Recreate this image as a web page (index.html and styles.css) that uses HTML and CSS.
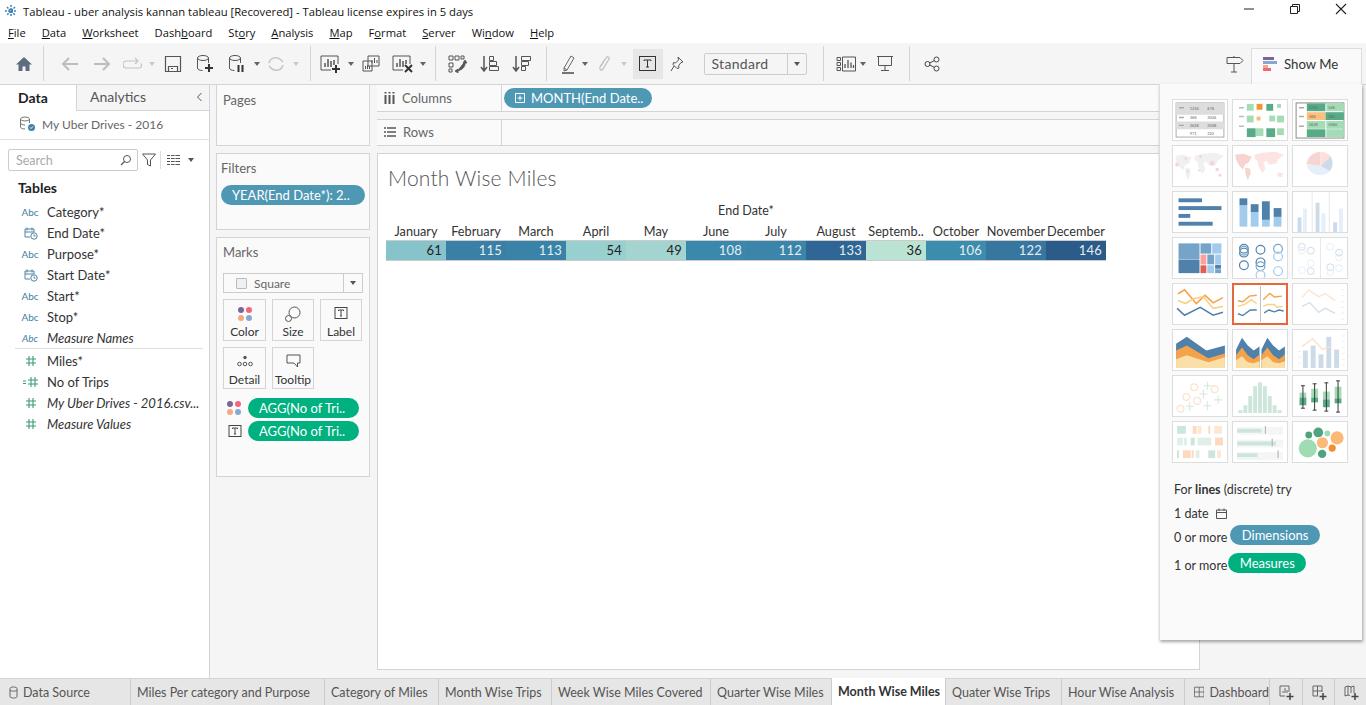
FILE: index.html
```html
<!DOCTYPE html>
<html lang="en">
<head>
  <meta charset="UTF-8">
  <title>Tableau - uber analysis kannan tableau [Recovered]</title>
  <link rel="stylesheet" href="styles.css">
</head>
<body>
  <svg class="defs" width="0" height="0">
    <symbol id="date" viewBox="0 0 14 14"><path d="M1 3h9v3M1 3v8h5M1 6h9M3 1.500v3M8 1.500v3" fill="none" stroke="#4e86a3"/><circle cx="10" cy="10" r="3.200" fill="#fff" stroke="#4e86a3"/><path d="M10 8.500V10h1.500" fill="none" stroke="#4e86a3"/></symbol>
    <symbol id="hash" viewBox="0 0 12 12"><path d="M4 1v10M8 1v10M1 4h10M1 8h10" fill="none" stroke="#3d9a78" stroke-width="1.100"/></symbol>
    <symbol id="dots" viewBox="0 0 16 16"><circle cx="4" cy="4" r="3" fill="#7b6794"/><circle cx="12" cy="4" r="3" fill="#f2677c"/><circle cx="4" cy="12" r="3" fill="#f4a97f"/><circle cx="12" cy="12" r="3" fill="#86a8d3"/></symbol>
    <symbol id="tbox" viewBox="0 0 14 14"><rect x="1" y="1.500" width="12" height="11" fill="none" stroke="#444"/><path d="M4.500 5V4h5v1M7 4v6M6 10h2" fill="none" stroke="#444"/></symbol>
  </svg>

  <div class="titlebar">
    <svg class="app-logo" width="14" height="14" viewBox="0 0 14 14"><path d="M7 1v12M1 7h12M3 3l8 8M11 3l-8 8" stroke="#3f82b5" stroke-width="1.500" stroke-dasharray="2 1"/></svg>
    <span class="app-title">Tableau - uber analysis kannan tableau [Recovered] - Tableau license expires in 5 days</span>
    <div class="win-btns">
      <svg width="12" height="12" viewBox="0 0 12 12"><path d="M1 6h10" stroke="#222"/></svg>
      <svg width="12" height="12" viewBox="0 0 12 12"><path d="M1.500 3.500h7v7h-7zM3.500 3.500v-2h7v7h-2" fill="none" stroke="#222"/></svg>
      <svg width="12" height="12" viewBox="0 0 12 12"><path d="M1 1l10 10M11 1L1 11" stroke="#222" stroke-width="1.100"/></svg>
    </div>
  </div>

  <div class="menubar">
    <span><u>F</u>ile</span>
    <span><u>D</u>ata</span>
    <span><u>W</u>orksheet</span>
    <span>Dash<u>b</u>oard</span>
    <span>St<u>o</u>ry</span>
    <span><u>A</u>nalysis</span>
    <span><u>M</u>ap</span>
    <span>F<u>o</u>rmat</span>
    <span><u>S</u>erver</span>
    <span>Wi<u>n</u>dow</span>
    <span><u>H</u>elp</span>
  </div>

  <div class="toolbar">
    <div class="tool"><svg width="18" height="18" viewBox="0 0 18 18"><path d="M9 2L1 9.500h2.500V16h4v-4.500h3V16h4V9.500H17z" fill="#5d6d7e"/></svg></div>
    <i class="sep sep-home"></i>
    <div class="tool"><svg width="20" height="18" viewBox="0 0 20 18"><path d="M18 9H3M9 3L3 9l6 6" fill="none" stroke="#bdbdbd" stroke-width="2"/></svg></div>
    <div class="tool"><svg width="20" height="18" viewBox="0 0 20 18"><path d="M2 9h15M11 3l6 6-6 6" fill="none" stroke="#bdbdbd" stroke-width="2"/></svg></div>
    <div class="tool tool-redo"><svg width="20" height="14" viewBox="0 0 20 14"><path d="M14 4H3.500a2.500 2.500 0 000 7h13a2.500 2.500 0 001-4.500M12 1l3 3-3 3" fill="none" stroke="#c4c4c4" stroke-width="1.200"/></svg></div>
    <i class="caret off caret-redo"></i>
    <div class="tool"><svg width="18" height="18" viewBox="0 0 18 18"><path d="M1.500 1.500h15v15h-15zM4.500 16.500v-5h9v5M7 13.500h2" fill="none" stroke="#555" stroke-width="1.200"/></svg></div>
    <div class="tool"><svg width="18" height="20" viewBox="0 0 18 20"><ellipse cx="7" cy="4" rx="5.500" ry="2.500" fill="none" stroke="#555"/><path d="M1.500 4v10c0 1.500 2 2.500 5 2.500M12.500 4v5" fill="none" stroke="#555"/><path d="M13 10v8M9 14h8" stroke="#333" stroke-width="2"/></svg></div>
    <div class="tool"><svg width="18" height="20" viewBox="0 0 18 20"><ellipse cx="7" cy="4" rx="5.500" ry="2.500" fill="none" stroke="#555"/><path d="M1.500 4v10c0 1.500 2 2.500 5 2.500M12.500 4v5" fill="none" stroke="#555"/><path d="M10.500 11v7M14.500 11v7" stroke="#333" stroke-width="2"/></svg></div>
    <i class="caret"></i>
    <div class="tool"><svg width="18" height="18" viewBox="0 0 18 18"><path d="M2 8a7 7 0 0112-3l2 2M16 10a7 7 0 01-12 3l-2-2" fill="none" stroke="#c4c4c4" stroke-width="1.500"/></svg></div>
    <i class="caret off"></i>
    <i class="sep sep-sheet"></i>
    <div class="tool"><svg width="22" height="20" viewBox="0 0 22 20"><path d="M1 2h17v8M1 2v14h10" fill="none" stroke="#555"/><path d="M5 13V9M8 13V5M11 13V7M14 11V6" stroke="#555" stroke-width="1.500"/><path d="M16 11v8M12 15h8" stroke="#333" stroke-width="2"/></svg></div>
    <i class="caret caret-sheet"></i>
    <div class="tool"><svg width="18" height="18" viewBox="0 0 18 18"><path d="M6 1h11v10H6zM1 6h9v10H1z" fill="#f5f5f5" stroke="#555"/><path d="M10 8V5M12.500 8V3M15 8V5M3.500 14v-3M5.500 14v-4M7.500 14v-3" stroke="#555"/></svg></div>
    <div class="tool"><svg width="22" height="20" viewBox="0 0 22 20"><path d="M1 2h17v8M1 2v14h10" fill="none" stroke="#555"/><path d="M5 13V9M8 13V5M11 13V7M14 10V6" stroke="#555" stroke-width="1.500"/><path d="M13 11l7 7M20 11l-7 7" stroke="#333" stroke-width="2"/></svg></div>
    <i class="caret"></i>
    <i class="sep sep-swap"></i>
    <div class="tool"><svg width="20" height="18" viewBox="0 0 20 18"><path d="M1 1h4v4H1zM7 1h4v4H7zM13 1h3v3h-3zM1 8h4v4H1zM1 14h3v3H1z" fill="none" stroke="#555"/><path d="M17 6c1 5-2 9-8 10M7 16l3-2v4zM15 8l2-3 2 3z" fill="#555" stroke="#555" stroke-width=".800"/></svg></div>
    <div class="tool"><svg width="20" height="18" viewBox="0 0 20 18"><path d="M4 1v14M1 12l3 4 3-4" fill="none" stroke="#555" stroke-width="1.500"/><path d="M9.500 1.500h4v4h-4zM9.500 6.500h7v4h-7zM9.500 11.500h9v4h-9z" fill="none" stroke="#555"/></svg></div>
    <div class="tool"><svg width="20" height="18" viewBox="0 0 20 18"><path d="M4 1v14M1 12l3 4 3-4" fill="none" stroke="#555" stroke-width="1.500"/><path d="M9.500 1.500h9v4h-9zM9.500 6.500h7v4h-7zM9.500 11.500h4v4h-4z" fill="none" stroke="#555"/></svg></div>
    <i class="sep sep-mark"></i>
    <div class="tool"><svg width="16" height="20" viewBox="0 0 16 20"><path d="M3 14L10 2l3 2-7 12-3 1zM3 14l3 2" fill="none" stroke="#666"/><path d="M1 19h12" stroke="#555" stroke-width="1.600"/></svg></div>
    <i class="caret caret-mark"></i>
    <div class="tool"><svg width="14" height="18" viewBox="0 0 14 18"><path d="M3 11l5-8c1-2 4-1 3 1l-6 10c-1 2-4 1-3-2l5-8" fill="none" stroke="#bdbdbd" stroke-width="1.200"/></svg></div>
    <i class="caret off"></i>
    <div class="tool-t"><svg width="17" height="15" viewBox="0 0 17 15"><rect x=".500" y=".500" width="16" height="14" fill="none" stroke="#333"/><path d="M5 5V4h7v1M8.500 4v7M7 11h3" fill="none" stroke="#333"/></svg></div>
    <div class="tool tool-pin"><svg width="14" height="16" viewBox="0 0 14 16"><path d="M8 1l5 5-2 .500-2.500 3.500.5 2-2 .500-4-4 .500-2 2 .500 3-3zM4 10l-3 5" fill="none" stroke="#555"/></svg></div>
    <div class="fit-select"><span>Standard</span><b><i class="caret dark"></i></b></div>
    <i class="sep sep-fit"></i>
    <div class="tool"><svg width="20" height="16" viewBox="0 0 20 16"><path d="M1 1.500h3.500v3H1zM1 6.500h3.500v3H1zM1 11.500h3.500v3H1zM6.500 1h13v14h-13z" fill="none" stroke="#555"/><path d="M9 12V8M12 12V4M15 12V6.500M17.500 12V9" stroke="#555" stroke-width="1.300"/></svg></div>
    <i class="caret caret-showme"></i>
    <div class="tool"><svg width="18" height="17" viewBox="0 0 18 17"><path d="M1 1.500h16M2.500 1.500v9h13v-9M9 10.500V15M5 15.500h8" fill="none" stroke="#555"/></svg></div>
    <i class="sep sep-share"></i>
    <div class="tool"><svg width="16" height="16" viewBox="0 0 16 16"><circle cx="12.500" cy="3.500" r="2.500" fill="none" stroke="#444"/><circle cx="3.500" cy="8" r="2.500" fill="none" stroke="#444"/><circle cx="12.500" cy="12.500" r="2.500" fill="none" stroke="#444"/><path d="M5.800 7l4.500-2.400M5.800 9l4.500 2.400" stroke="#444"/></svg></div>
    <div class="tool tool-sign"><svg width="18" height="18" viewBox="0 0 18 18"><path d="M1 2.500h13l3 3-3 3H1zM8 8.500V17M5 17h6M8 1v1.500" fill="none" stroke="#555"/></svg></div>
    <div class="showme-tab">
      <svg width="15" height="14" viewBox="0 0 15 14"><path d="M0 0h11v3H0z" fill="#7b6794"/><path d="M0 4h14v3H0z" fill="#86a8d3"/><path d="M0 8h5v3H0z" fill="#f4a97f"/><path d="M0 11h8v3H0z" fill="#f2677c"/></svg>
      Show Me
    </div>
  </div>

  <div class="main">
    <aside class="data-pane">
      <div class="pane-tabs">
        <div class="pane-tab active">Data</div>
        <div class="pane-tab">Analytics<svg width="8" height="10" viewBox="0 0 8 10"><path d="M6.500 1l-4 4 4 4" fill="none" stroke="#555"/></svg></div>
      </div>
      <div class="source">
        <svg width="17" height="16" viewBox="0 0 17 16"><ellipse cx="6" cy="3" rx="4.500" ry="2" fill="none" stroke="#777"/><path d="M1.500 3v8c0 1 2 2 4.500 2M10.500 3v4M1.500 7c0 1 2 2 4.500 2" fill="none" stroke="#777"/><circle cx="12.500" cy="11.500" r="3.500" fill="#3f83a8"/><path d="M11 11.500l1 1 2-2" fill="none" stroke="#fff"/></svg>
        My Uber Drives - 2016
      </div>
      <div class="search-row">
        <div class="search">Search<svg width="12" height="12" viewBox="0 0 12 12"><circle cx="7" cy="5" r="3.500" fill="none" stroke="#555"/><path d="M4.500 7.500L1 11" stroke="#555" stroke-width="1.300"/></svg></div>
        <svg class="funnel" width="14" height="14" viewBox="0 0 14 14"><path d="M.5 1h13L8.500 7v6l-3-1.500V7z" fill="none" stroke="#555"/></svg>
        <i class="search-sep"></i>
        <svg width="13" height="10" viewBox="0 0 13 10"><path d="M0 .5h3M4 .5h9M0 3.500h3M4 3.500h9M0 6.500h3M4 6.500h9M0 9.500h3M4 9.500h9" stroke="#555"/><path d="M3.500 0v10M8 0v10" stroke="#fff" stroke-width=".800"/></svg>
        <i class="caret dark caret-list"></i>
      </div>
      <h3 class="tables-title">Tables</h3>
      <ul class="fields">
        <li><span class="abc">Abc</span>Category*</li>
        <li><svg width="14" height="14"><use href="#date"/></svg>End Date*</li>
        <li><span class="abc">Abc</span>Purpose*</li>
        <li><svg width="14" height="14"><use href="#date"/></svg>Start Date*</li>
        <li><span class="abc">Abc</span>Start*</li>
        <li><span class="abc">Abc</span>Stop*</li>
        <li class="gen"><span class="abc">Abc</span>Measure Names</li>
      </ul>
      <ul class="fields measures">
        <li><svg width="12" height="12"><use href="#hash"/></svg>Miles*</li>
        <li><svg class="calc" width="16" height="12" viewBox="0 0 16 12"><path d="M0 5h3M0 7.500h3" stroke="#3d9a78"/><path d="M8 1v10M12 1v10M5 4h10M5 8h10" fill="none" stroke="#3d9a78" stroke-width="1.100"/></svg>No of Trips</li>
        <li class="gen"><svg width="12" height="12"><use href="#hash"/></svg>My Uber Drives - 2016.csv...</li>
        <li class="gen"><svg width="12" height="12"><use href="#hash"/></svg>Measure Values</li>
      </ul>
    </aside>

    <section class="cards">
      <div class="card card-pages"><div class="card-title">Pages</div></div>
      <div class="card card-filters">
        <div class="card-title">Filters</div>
        <div class="pill blue filter-pill">YEAR(End Date*): 2..</div>
      </div>
      <div class="card card-marks">
        <div class="card-title">Marks</div>
        <div class="mark-type"><i class="square"></i><span>Square</span><b><i class="caret dark"></i></b></div>
        <div class="mark-btns">
          <div class="mark-btn"><svg width="16" height="16"><use href="#dots"/></svg>Color</div>
          <div class="mark-btn"><svg width="16" height="16" viewBox="0 0 16 16"><circle cx="9.500" cy="6.500" r="5.500" fill="none" stroke="#555"/><circle cx="3.500" cy="12.500" r="3" fill="#fafafa" stroke="#555"/></svg>Size</div>
          <div class="mark-btn"><svg width="14" height="14"><use href="#tbox"/></svg>Label</div>
          <div class="mark-btn"><svg width="16" height="14" viewBox="0 0 16 14"><circle cx="8" cy="3.500" r="1.700" fill="#555"/><circle cx="2.500" cy="10" r="1.800" fill="none" stroke="#555"/><circle cx="8" cy="10" r="1.800" fill="none" stroke="#555"/><circle cx="13.500" cy="10" r="1.800" fill="none" stroke="#555"/></svg>Detail</div>
          <div class="mark-btn"><svg width="15" height="14" viewBox="0 0 15 14"><path d="M1 1h13v8h-2.500v4L8 9H1z" fill="none" stroke="#555"/></svg>Tooltip</div>
        </div>
        <div class="mark-pill"><svg width="16" height="16"><use href="#dots"/></svg><div class="pill green">AGG(No of Tri..</div></div>
        <div class="mark-pill"><svg width="14" height="14"><use href="#tbox"/></svg><div class="pill green">AGG(No of Tri..</div></div>
      </div>
    </section>

    <section class="work">
      <div class="shelf">
        <div class="shelf-label"><svg width="11" height="12" viewBox="0 0 11 12"><path d="M1.500 3v9M5.500 3v9M9.500 3v9" stroke="#555" stroke-width="2"/><path d="M1.500 0v1.500M5.500 0v1.500M9.500 0v1.500" stroke="#555" stroke-width="2"/></svg>Columns</div>
        <div class="shelf-body"><div class="pill blue month-pill"><svg width="10" height="10" viewBox="0 0 10 10"><path d="M.5.500h9v9h-9zM5 2.500v5M2.500 5h5" fill="none" stroke="#fff"/></svg>MONTH(End Date..</div></div>
      </div>
      <div class="shelf shelf-rows">
        <div class="shelf-label"><svg width="12" height="10" viewBox="0 0 12 10"><path d="M3 1h9M3 5h9M3 9h9M0 1h2M0 5h2M0 9h2" stroke="#555" stroke-width="1.500"/></svg>Rows</div>
        <div class="shelf-body"></div>
      </div>
      <div class="canvas">
        <h1 class="sheet-title">Month Wise Miles</h1>
        <div class="axis-title">End Date*</div>
        <div class="months">
          <span>January</span><span>February</span><span>March</span><span>April</span><span>May</span><span>June</span><span>July</span><span>August</span><span>Septemb..</span><span>October</span><span>November</span><span>December</span>
        </div>
        <div class="heat">
          <span style="background:#86c3ca">61</span>
          <span class="lt" style="background:#3a7fa5">115</span>
          <span class="lt" style="background:#3a83a8">113</span>
          <span style="background:#98d0d0">54</span>
          <span style="background:#a3d4d0">49</span>
          <span class="lt" style="background:#3a89ac">108</span>
          <span class="lt" style="background:#3a85a9">112</span>
          <span class="lt" style="background:#2f6695">133</span>
          <span style="background:#bbe3d3">36</span>
          <span class="lt" style="background:#3c8cad">106</span>
          <span class="lt" style="background:#37769f">122</span>
          <span class="lt" style="background:#2a5b89">146</span>
        </div>
      </div>
    </section>

    <aside class="showme">
      <div class="thumbs">
        <svg viewBox="0 0 55 41"><rect x="3" y="3" width="49" height="35" fill="#fff" stroke="#aaa"/><path d="M3 3h49v12H3zM3 22h49v8H3z" fill="#ddd"/><path d="M6 8h5M6 18h5M6 26h5" stroke="#aaa" stroke-width="1.500"/><g class="tiny"><text x="17" y="10">1234</text><text x="35" y="10">678</text><text x="17" y="19">368</text><text x="35" y="19">3034</text><text x="17" y="28">2628</text><text x="35" y="28">2508</text><text x="17" y="36">971</text><text x="35" y="36">322</text></g></svg>
        <svg viewBox="0 0 55 41"><path d="M6 8h5M6 17h5M6 27h5" stroke="#bbb" stroke-width="1.500"/><g fill="#a3dcb6"><rect x="14" y="4" width="7" height="7"/><rect x="14" y="16" width="7" height="7"/><rect x="37" y="16" width="6" height="6"/><rect x="45" y="16" width="7" height="7"/><rect x="23" y="29" width="8" height="8"/><rect x="45" y="29" width="7" height="7"/><rect x="45" y="4" width="4" height="4"/></g><g fill="#58ab87"><rect x="34" y="4" width="7" height="7"/><rect x="14" y="29" width="9" height="9"/><rect x="34" y="29" width="9" height="9"/></g><rect x="24" y="4" width="6" height="6" fill="#f59331"/><rect x="24" y="17" width="4" height="4" fill="#fbb978"/></svg>
        <svg viewBox="0 0 55 41"><rect x="3" y="3" width="49" height="36" fill="#fff" stroke="#888"/><path d="M6 8h5M6 17h5M6 27h5" stroke="#aaa" stroke-width="1.500"/><g fill="#58ab87"><rect x="14" y="3.500" width="19" height="8"/><rect x="33" y="12.500" width="19" height="8"/><rect x="14" y="30" width="19" height="8"/></g><g fill="#a3dcb6"><rect x="34" y="3.500" width="18" height="8"/><rect x="14" y="21.500" width="19" height="8"/><rect x="34" y="21.500" width="18" height="8"/><rect x="34" y="30" width="18" height="8"/></g><rect x="14" y="12.500" width="19" height="8" fill="#fbbf7f"/><g class="tiny"><text x="16" y="9">1234</text><text x="36" y="9">546</text><text x="16" y="18">368</text><text x="36" y="18">380</text><text x="16" y="27">2628</text><text x="36" y="27">5060</text></g></svg>

        <svg viewBox="0 0 55 41"><path d="M2 10l9-1 8 3-3 6-4 2-2 5-4-4-3-6zM12 22l5 1 1 5-3 7-2-5zM22 10l7-2 14-1 9 3-6 5-2 4-7 1-3-4-3 2 2 6-3 5-4-7-1-6-3-2z" fill="#f0f0f0"/><g fill="#f6d5d3"><circle cx="4" cy="19" r="2"/><circle cx="13" cy="13" r="1.500"/><circle cx="28" cy="11" r="1.500"/><circle cx="40" cy="18" r="2.500"/><circle cx="45" cy="24" r="1.800"/><circle cx="48" cy="30" r="1.500"/><circle cx="15" cy="26" r="1.200"/><circle cx="27" cy="25" r="1.200"/></g></svg>
        <svg viewBox="0 0 55 41"><path d="M2 9l9-1 8 3-3 6-4 2-2 5-4-4-3-6z" fill="#f8d4d0"/><path d="M12 22l5 1 1 5-3 7-2-5z" fill="#f8d4d0"/><path d="M22 9l7-2 14-1 9 3-6 5-2 4-7 1-3-4-3 2 2 6-3 5-4-7-1-6-3-2zM46 27l5 1-1 4-5-1z" fill="#fde4e2"/></svg>
        <svg viewBox="0 0 55 41"><path d="M28 20.500V6a14.500 14.500 0 00-14.300 12.500z" fill="#f6d5d3"/><path d="M28 20.500V6a14.500 14.500 0 0110.500 4.500z" fill="#fde0de"/><path d="M28 20.500l10.500-10a14.500 14.500 0 01-1 15.500z" fill="#cddbe8"/><path d="M28 20.500l9.500 5.500A14.500 14.500 0 0113.500 18.500z" fill="#e4eff9"/></svg>

        <svg viewBox="0 0 55 41"><g fill="#4f81ab"><rect x="5.500" y="6.500" width="24" height="4"/><rect x="5.500" y="14.500" width="44" height="4"/><rect x="5.500" y="22.500" width="12" height="4"/><rect x="5.500" y="30.500" width="35" height="4"/></g></svg>
        <svg viewBox="0 0 55 41"><g fill="#a3cbeb"><rect x="6.500" y="13.500" width="8" height="22"/><rect x="18" y="20.500" width="8" height="15"/><rect x="29.500" y="28.500" width="8" height="7"/><rect x="41.500" y="25.500" width="8" height="10"/></g><g fill="#4f81ab"><rect x="6.500" y="6.500" width="8" height="7"/><rect x="18" y="12.500" width="8" height="8"/><rect x="29.500" y="9.500" width="8" height="19"/><rect x="41.500" y="16.500" width="8" height="9"/></g></svg>
        <svg viewBox="0 0 55 41"><path d="M19.500 0v41M37 0v41" stroke="#e8e8e8"/><g fill="#cddbe8"><rect x="4.500" y="26" width="4" height="15"/><rect x="23" y="11" width="4" height="30"/><rect x="41" y="31" width="4" height="10"/></g><g fill="#e4eff9"><rect x="10" y="17" width="4" height="24"/><rect x="29" y="22" width="4" height="19"/><rect x="47" y="17" width="4" height="24"/></g></svg>

        <svg viewBox="0 0 55 41"><g fill="#76a4c9"><rect x="5.500" y="5.500" width="21.500" height="16"/><rect x="28" y="5.500" width="11" height="10.500"/><rect x="35" y="17" width="7" height="10"/><rect x="43" y="32" width="6" height="4"/></g><g fill="#4f81ab"><rect x="5.500" y="22" width="21.500" height="14"/><rect x="43" y="27.500" width="6" height="4"/></g><g fill="#a3cbeb"><rect x="40" y="5.500" width="9.500" height="10.500"/><rect x="43" y="17" width="6" height="10"/><rect x="35" y="28" width="7" height="8"/></g><rect x="28" y="17" width="6" height="10" fill="#ff9f9a"/><rect x="28" y="28" width="6" height="8" fill="#e2604f"/></svg>
        <svg viewBox="0 0 55 41"><g fill="none" stroke-width="1.200"><g stroke="#4f81ab"><circle cx="11" cy="11" r="4.500"/><circle cx="11" cy="15" r="4.500"/><circle cx="11" cy="28" r="4.500"/><circle cx="28" cy="12" r="4.500"/><circle cx="28" cy="25" r="4.500"/></g><g stroke="#76a4c9"><circle cx="11" cy="13" r="4.500"/><circle cx="28" cy="29" r="4.500"/><circle cx="46" cy="11" r="4.500"/></g><g stroke="#a3cbeb"><circle cx="28" cy="38" r="4.500"/><circle cx="46" cy="19" r="4.500"/><circle cx="46" cy="34" r="4.500"/></g></g></svg>
        <svg viewBox="0 0 55 41"><path d="M28 0v41" stroke="#e8e8e8"/><g fill="none" stroke-width="1"><g stroke="#cddbe8"><circle cx="9" cy="9" r="3.500"/><circle cx="18" cy="13" r="3.500"/><circle cx="18" cy="34" r="3.500"/><circle cx="47" cy="15" r="3.500"/><circle cx="38" cy="30" r="3.500"/></g><g stroke="#e4eff9"><circle cx="9" cy="13" r="3.500"/><circle cx="9" cy="33" r="3.500"/><circle cx="18" cy="26" r="3.500"/><circle cx="38" cy="9" r="3.500"/><circle cx="47" cy="20" r="3.500"/><circle cx="38" cy="35" r="3.500"/><circle cx="47" cy="31" r="3.500"/></g></g></svg>

        <svg viewBox="0 0 55 41"><g fill="none" stroke-width="1.600"><path d="M5 10l6.700-4 12 14 9-8.300L41 19.300 51 14" stroke="#f5a34a"/><path d="M5 17l7.600 3L21 15l10-2 10 12 10-2" stroke="#fbcf7e"/><path d="M4 25l7.700 7 16-8L41 32l10-3" stroke="#4f81ab"/></g></svg>
        <svg class="picked" viewBox="0 0 55 41"><path d="M28 1v39" stroke="#bbb"/><g fill="none" stroke-width="1.500"><path d="M3.700 17L9 18l7-6 8-1M31 16l7-7 5 4 8-1" stroke="#f5a34a"/><path d="M3.700 23L11 21l7-5 6 4M31 23l5-2h7l3 3 6-1" stroke="#fbcf7e"/><path d="M3.700 31L9 33l8-6h7M32 30l5-3 6 2 5-2 5 1" stroke="#4f81ab"/></g></svg>
        <svg viewBox="0 0 55 41"><g fill="none" stroke-width="1.400"><path d="M9 14l7-8 10 7 7-3 10 7" stroke="#fde5cf"/><path d="M9 23l8-4 9 10 7-4 10 5" stroke="#d6e1ec"/><path d="M49 6h3M49 12h3M49 18h3M49 24h3M49 30h3M49 36h3" stroke="#eee" stroke-width="1"/></g></svg>

        <svg viewBox="0 0 55 41"><path d="M3 14L14 7l20 14 19-5v23H3z" fill="#4f81ab"/><path d="M3 21l11-5 22 13 17-5v15H3z" fill="#f5a34a"/><path d="M3 30l11-4 22 7 17-5v11H3z" fill="#fbdfa9"/></svg>
        <svg viewBox="0 0 55 41"><path d="M3 20L9 8l6 8 6 5 6-4v22H3zM29 20l6-12 6 8 6 5 6-4v22H29z" fill="#4f81ab"/><path d="M3 26l6-8 6 8 6 4 6-5v14H3zM29 26l6-8 6 8 6 4 6-5v14H29z" fill="#f5a34a"/><path d="M3 31l6-4 6 6 6 1 6-2v7H3zM29 31l6-4 6 6 6 1 6-2v7H29z" fill="#fbdfa9"/></svg>
        <svg viewBox="0 0 55 41"><g fill="#cddbe8"><rect x="10" y="21" width="5" height="18"/><rect x="18" y="16" width="5" height="23"/><rect x="26" y="25" width="5" height="14"/><rect x="34" y="7" width="5" height="32"/><rect x="42" y="20" width="5" height="19"/></g><path d="M9 17l11-8 10 11 8-3" fill="none" stroke="#fde0c8" stroke-width="1.400"/><path d="M50 6h3M50 12h3M50 18h3M50 24h3M50 30h3M50 36h3M5 22h3M5 28h3M5 34h3" stroke="#eee"/></svg>

        <svg viewBox="0 0 55 41"><g fill="none" stroke="#fde3d0" stroke-width="1.300"><circle cx="7.500" cy="33.500" r="3.500"/><circle cx="13.500" cy="21.500" r="3.500"/><circle cx="21.500" cy="11.500" r="3.500"/><circle cx="24.500" cy="25.500" r="3.500"/><circle cx="42.500" cy="13.500" r="3.500"/></g><path d="M35 6v8M31 10h8M31 14v9M27 18.500h8M46 20v9M42 24.500h8M17 27v9M13 31h8M35 26v9M31 30.500h8" stroke="#d5e8e0" stroke-width="1.100"/></svg>
        <svg viewBox="0 0 55 41"><g fill="#cde6da"><rect x="5.500" y="35" width="4" height="3"/><rect x="10.500" y="30" width="4" height="8"/><rect x="15.500" y="20.500" width="4" height="17.500"/><rect x="20.500" y="10.500" width="4" height="27.500"/><rect x="25.500" y="6.500" width="4" height="31.500"/><rect x="30.500" y="10.500" width="4" height="27.500"/><rect x="35.500" y="20.500" width="4" height="17.500"/><rect x="40.500" y="30" width="4" height="8"/><rect x="45.500" y="35" width="4" height="3"/></g></svg>
        <svg viewBox="0 0 55 41"><g fill="#a3dcb6"><rect x="6.500" y="17" width="7" height="5"/><rect x="18.500" y="13" width="7" height="9"/><rect x="30.500" y="16" width="7" height="8"/><rect x="42.500" y="11" width="7" height="12"/></g><g fill="#58ab87"><rect x="6.500" y="22" width="7" height="8"/><rect x="18.500" y="22" width="7" height="5"/><rect x="30.500" y="24" width="7" height="8"/><rect x="42.500" y="23" width="7" height="5"/></g><path d="M10 10v23M8 10h4M8 33h4M22 8v27M20 8h4M20 35h4M34 7v29M32 7h4M32 36h4M46 5v32M44 5h4M44 37h4" stroke="#333" stroke-width="1"/></svg>

        <svg viewBox="0 0 55 41"><g fill="#cde6da"><rect x="4" y="4" width="9" height="8"/><rect x="18" y="16" width="4" height="8"/><rect x="36" y="29" width="7" height="8"/><rect x="4" y="29" width="2" height="8"/></g><g fill="#e0f0e8"><rect x="4" y="16" width="6" height="8"/><rect x="11" y="16" width="3" height="8"/><rect x="25" y="16" width="14" height="8"/><rect x="23" y="29" width="4" height="8"/></g><g fill="#fdd9c0"><rect x="20" y="4" width="4" height="8"/><rect x="36" y="4" width="2" height="8"/><rect x="43" y="16" width="8" height="8"/><rect x="10" y="29" width="8" height="8"/><rect x="19" y="29" width="2" height="8"/></g><g fill="#fde8d8"><rect x="25" y="4" width="4" height="8"/><rect x="42" y="4" width="8" height="8"/><rect x="45" y="29" width="4" height="8"/></g></svg>
        <svg viewBox="0 0 55 41"><g fill="#f5f5f5"><rect x="4" y="5" width="47" height="8"/><rect x="4" y="18" width="47" height="8"/><rect x="4" y="31" width="47" height="8"/></g><g fill="#cde6da"><rect x="4" y="7" width="25" height="4"/><rect x="4" y="20" width="40" height="4"/><rect x="4" y="32" width="21" height="4"/></g><path d="M33 4v8M40 17v8M46 29v8" stroke="#aaa" stroke-width="1"/></svg>
        <svg viewBox="0 0 55 41"><g fill="#9fdcb4"><circle cx="15" cy="27" r="9.300"/><circle cx="35" cy="11.700" r="3"/></g><g fill="#4fa37f"><circle cx="25.700" cy="10.700" r="5"/><circle cx="16" cy="13.300" r="3.500"/><circle cx="29.700" cy="32.700" r="4.300"/></g><g fill="#fbb978"><circle cx="45" cy="16.300" r="6.700"/><circle cx="30" cy="21.300" r="5.700"/></g><circle cx="40" cy="26.700" r="3.700" fill="#f58d2f"/></svg>
      </div>
      <div class="hint">
        <p class="hint-head">For <b>lines</b> (discrete) try</p>
        <p class="hint-date">1 date<svg width="11" height="11" viewBox="0 0 11 11"><path d="M.5 2h10v8.500H.5zM.5 4.500h10M3 .5V3M8 .5V3" fill="none" stroke="#555"/></svg></p>
        <p class="hint-dim">0 or more<span class="pill blue hint-pill">Dimensions</span></p>
        <p class="hint-mea">1 or more<span class="pill green hint-pill">Measures</span></p>
      </div>
    </aside>
  </div>

  <div class="tabs">
    <div class="tab first"><svg width="9" height="13" viewBox="0 0 9 13"><path d="M1 2.500v8c0 2 7 2 7 0v-8c0-2-7-2-7 0zM1 4c0 1.500 7 1.500 7 0" fill="none" stroke="#666"/></svg>Data Source</div>
    <div class="tab">Miles Per category and Purpose</div>
    <div class="tab">Category of Miles</div>
    <div class="tab">Month Wise Trips</div>
    <div class="tab">Week Wise Miles Covered</div>
    <div class="tab">Quarter Wise Miles</div>
    <div class="tab current">Month Wise Miles</div>
    <div class="tab">Quater Wise Trips</div>
    <div class="tab">Hour Wise Analysis</div>
    <div class="tab first"><svg width="12" height="12" viewBox="0 0 12 12"><path d="M.5.500h11v11H.5zM6 .5v11M.5 6h11" fill="none" stroke="#666"/></svg>Dashboard</div>
    <div class="tab icon"><svg width="15" height="15" viewBox="0 0 15 15"><path d="M1 1h9v6M1 1v10h5" fill="none" stroke="#666"/><path d="M4 8V6M6 8V3M8 8V5" stroke="#666"/><path d="M11 8v7M7.500 11.500h7" stroke="#444" stroke-width="1.500"/></svg></div>
    <div class="tab icon"><svg width="15" height="15" viewBox="0 0 15 15"><path d="M1 1h9v6M1 1v10h5M5.500 1v10M1 6h9" fill="none" stroke="#666"/><path d="M11 8v7M7.500 11.500h7" stroke="#444" stroke-width="1.500"/></svg></div>
    <div class="tab icon"><svg width="15" height="15" viewBox="0 0 15 15"><path d="M1 2l3-1 3 1 3-1v7M1 2v9l3-1 2 .5M4 1v9M7 2v6" fill="none" stroke="#666"/><path d="M11 8v7M7.500 11.500h7" stroke="#444" stroke-width="1.500"/></svg></div>
  </div>
</body>
</html>
```

FILE: styles.css
```css
html, body {
  margin: 0;
  padding: 0;
  height: 705px;
  overflow: hidden;
}
body {
  font-family: Lato, 'Open Sans', sans-serif;
  font-size: 13px;
  color: #333;
  background: #fff;
  position: relative;
}
.defs {
  position: absolute;
}

/* window chrome */
.titlebar {
  height: 22px;
  display: flex;
  align-items: center;
  padding-left: 4px;
  font-family: 'Open Sans', sans-serif;
  font-size: 11.25px;
  color: #111;
}
.app-logo {
  margin-right: 5px;
}
.win-btns {
  margin-left: auto;
  display: flex;
  gap: 34px;
  padding-right: 19px;
  margin-top: -4px;
}
.menubar {
  height: 21px;
  display: flex;
  align-items: center;
  padding-left: 8px;
  gap: 16px;
  font-family: 'Open Sans', sans-serif;
  font-size: 11.2px;
  color: #111;
}

/* toolbar */
.toolbar {
  height: 41px;
  background: #f5f5f5;
  display: flex;
  align-items: center;
  padding-left: 8px;
}
.tool {
  width: 32px;
  flex: none;
  display: flex;
  align-items: center;
  justify-content: center;
}
.tool-redo {
  width: 30px;
}
.tool-pin {
  margin-left: -2px;
}
.tool-sign {
  margin-left: auto;
}
.tool-t {
  width: 30px;
  height: 30px;
  flex: none;
  margin-left: 5px;
  background: #e6e6e6;
  display: flex;
  align-items: center;
  justify-content: center;
}
.caret {
  width: 0;
  height: 0;
  flex: none;
  border-left: 3.500px solid transparent;
  border-right: 3.500px solid transparent;
  border-top: 4px solid #666;
  margin: 0 .500px;
}
.caret.off {
  border-top-color: #c8c8c8;
}
.caret.dark {
  border-top-color: #555;
}
.caret-redo {
  margin-right: 2.500px;
}
.caret-sheet {
  margin-right: 1.500px;
}
.caret-mark {
  margin-left: -3px;
}
.caret-showme {
  margin: 0 3px 0 -2px;
}
.sep {
  width: 1px;
  height: 35px;
  flex: none;
  background: #d4d4d4;
}
.sep-home {
  margin: 0 10px 0 3px;
}
.sep-sheet {
  margin: 0 4px 0 11px;
}
.sep-swap {
  margin: 0 6px 0 9px;
}
.sep-mark {
  margin: 0 6px 0 8px;
}
.sep-fit {
  margin: 0 6px 0 16px;
}
.sep-share {
  margin: 0 6px 0 8px;
}
.fit-select {
  width: 103px;
  height: 22px;
  box-sizing: border-box;
  flex: none;
  margin-left: 11px;
  border: 1px solid #ccc;
  border-radius: 2px;
  display: flex;
  align-items: center;
  font-size: 14px;
  letter-spacing: .3px;
  color: #555;
  padding-left: 7px;
}
.fit-select span {
  flex: 1;
}
.fit-select b {
  width: 18px;
  height: 100%;
  border-left: 1px solid #ccc;
  display: flex;
  align-items: center;
  justify-content: center;
}
.showme-tab {
  align-self: flex-end;
  width: 111px;
  height: 36px;
  box-sizing: border-box;
  margin: 0 4px 0 0;
  padding: 0 0 6px 11px;
  background: #fafafa;
  border: 1px solid #ddd;
  border-bottom: none;
  display: flex;
  align-items: center;
  gap: 6px;
  font-size: 13.200px;
  color: #333;
}

/* main area */
.main {
  height: 594px;
  display: flex;
  background: #f5f5f5;
  border-top: 1px solid #d4d4d4;
  box-sizing: border-box;
}
.data-pane {
  width: 210px;
  flex: none;
  box-sizing: border-box;
  background: #fff;
  border-right: 1px solid #d4d4d4;
}
.pane-tabs {
  height: 26px;
  display: flex;
  background: #f5f5f5;
}
.pane-tab {
  display: flex;
  align-items: center;
  flex: 1;
  padding-left: 13px;
  padding-bottom: 2px;
  box-sizing: border-box;
  font-size: 14px;
  border-bottom: 1px solid #d4d4d4;
  color: #555;
}
.pane-tab svg {
  margin-left: auto;
  margin-right: 6px;
}
.pane-tab.active {
  flex: none;
  width: 77px;
  padding-left: 18px;
  background: #fff;
  font-weight: 700;
  color: #222;
  border-bottom: none;
  border-right: 1px solid #d4d4d4;
}
.source {
  height: 29px;
  display: flex;
  align-items: center;
  gap: 6px;
  padding: 0 0 2px 19px;
  box-sizing: border-box;
  font-size: 12px;
  color: #666;
  border-bottom: 1px solid #e0e0e0;
}
.search-row {
  display: flex;
  align-items: center;
  margin-top: 9px;
  padding-left: 8px;
}
.search {
  width: 130px;
  height: 22px;
  box-sizing: border-box;
  border: 1px solid #ccc;
  border-radius: 2px;
  display: flex;
  align-items: center;
  justify-content: space-between;
  padding: 0 5px 0 7px;
  font-size: 12.500px;
  color: #aaa;
}
.funnel {
  margin-left: 4px;
}
.search-sep {
  width: 1px;
  height: 18px;
  background: #ddd;
  margin: 0 6px 0 4px;
}
.caret-list {
  margin-left: 8px;
}
.tables-title {
  margin: 8px 0 5px 18px;
  font-size: 14px;
  color: #222;
}
.fields {
  list-style: none;
  margin: 0 6px 0 15px;
  padding: 0;
}
.fields li {
  height: 21px;
  display: flex;
  align-items: center;
  color: #333;
  white-space: nowrap;
}
.fields li svg, .abc {
  width: 32px;
  flex: none;
  text-align: center;
}
.abc {
  font-size: 10px;
  color: #3f7f9e;
  padding-right: 2px;
  box-sizing: border-box;
}
.fields li.gen {
  font-style: italic;
}
.measures {
  border-top: 1px solid #ddd;
  padding-top: 1px;
}
.cards {
  width: 167px;
  flex: none;
  box-sizing: border-box;
  padding-left: 6px;
}
.card {
  width: 154px;
  box-sizing: border-box;
  background: #fafafa;
  border: 1px solid #d4d4d4;
  padding: 6px 6px;
}
.card-title {
  color: #666;
  font-size: 13px;
}
.card-pages {
  height: 62px;
  margin-top: -1px;
  padding-top: 7px;
}
.card-filters {
  height: 77px;
  margin-top: 7px;
  padding-left: 4px;
}
.card-marks {
  height: 240px;
  margin-top: 7px;
}
.pill {
  height: 20px;
  border-radius: 10px;
  display: flex;
  align-items: center;
  color: #fff;
  font-size: 13px;
  white-space: nowrap;
  box-sizing: border-box;
}
.pill.blue {
  background: #4f98b4;
}
.pill.green {
  background: #00b180;
}
.filter-pill {
  margin-top: 9px;
  width: 144px;
  padding-left: 11px;
}
.mark-type {
  height: 20px;
  margin-top: 13px;
  box-sizing: border-box;
  border: 1px solid #ccc;
  background: #fafafa;
  display: flex;
  align-items: center;
  padding-left: 12px;
  font-size: 12px;
  color: #666;
}
.mark-type span {
  flex: 1;
  margin-left: 7px;
}
.mark-type b {
  width: 18px;
  height: 100%;
  border-left: 1px solid #ccc;
  display: flex;
  align-items: center;
  justify-content: center;
}
.square {
  width: 9px;
  height: 9px;
  background: #f0f0f0;
  border: 1px solid #bbb;
  border-radius: 1px;
}
.mark-btns {
  display: grid;
  grid-template-columns: 43px 42px 42px;
  grid-auto-rows: 42px;
  gap: 6px;
  margin-top: 6px;
}
.mark-btn {
  box-sizing: border-box;
  border: 1px solid #d4d4d4;
  display: flex;
  flex-direction: column;
  align-items: center;
  justify-content: space-between;
  padding: 6px 0 1px;
  font-size: 12px;
  color: #333;
}
.mark-pill {
  display: flex;
  align-items: center;
  justify-content: flex-end;
  margin-top: 3px;
  padding-right: 4px;
  gap: 3px;
}
.mark-btns + .mark-pill {
  margin-top: 9px;
}
.mark-pill .pill {
  width: 111px;
  padding-left: 11px;
}
.mark-pill svg {
  margin-right: 3px;
}
.work {
  width: 823px;
  flex: none;
}
.shelf {
  height: 27px;
  display: flex;
  background: #fafafa;
  border-bottom: 1px solid #d4d4d4;
  box-sizing: border-box;
}
.shelf-rows {
  height: 27px;
  margin-top: 7px;
  border-top: 1px solid #d4d4d4;
}
.shelf-label {
  width: 125px;
  box-sizing: border-box;
  display: flex;
  align-items: center;
  gap: 7px;
  padding-left: 7px;
  border-right: 1px solid #d4d4d4;
  color: #666;
}
.shelf-rows .shelf-label {
  padding-bottom: 2px;
}
.shelf-body {
  flex: 1;
  padding: 3px 2px;
}
.month-pill {
  width: 148px;
  gap: 6px;
  padding-left: 11px;
}
.canvas {
  height: 517px;
  margin-top: 7px;
  box-sizing: border-box;
  background: #fff;
  border: 1px solid #d4d4d4;
  padding: 11px 0 0 8px;
}
.sheet-title {
  margin: 0 0 0 2px;
  font-size: 21px;
  font-weight: 300;
  letter-spacing: .2px;
  line-height: 26px;
  color: #555;
}
.axis-title {
  width: 720px;
  margin-top: 12px;
  line-height: 16px;
  text-align: center;
  font-size: 12.500px;
  color: #333;
}
.months, .heat {
  display: grid;
  grid-template-columns: repeat(12, 60px);
  width: 720px;
}
.months {
  margin-top: 2px;
  height: 19px;
  align-items: center;
  text-align: center;
  font-size: 12.700px;
  color: #333;
  white-space: nowrap;
}
.heat {
  height: 21px;
  border-top: 1px solid #ccc;
  border-bottom: 1px solid #ccc;
  box-sizing: border-box;
  line-height: 19px;
  text-align: right;
  font-size: 13px;
  letter-spacing: .2px;
}
.heat span {
  padding-right: 4px;
  color: #222;
}
.heat .lt {
  color: #e4eef3;
}

/* show me panel */
.showme {
  position: absolute;
  top: 84px;
  right: 4px;
  width: 203px;
  height: 556px;
  box-sizing: border-box;
  background: #fafafa;
  border-left: 1px solid #ddd;
  box-shadow: 1px 2px 3px rgba(0,0,0,0.35);
  padding: 15px 0 0 12px;
}
.thumbs {
  display: grid;
  grid-template-columns: repeat(3, 56px);
  grid-auto-rows: 42px;
  gap: 4px;
}
.thumbs svg {
  width: 56px;
  height: 42px;
  box-sizing: border-box;
  background: #fff;
  border: 1px solid #ddd;
}
.thumbs svg.picked {
  border: 2px solid #e3683a;
}
.tiny text {
  font-size: 4px;
  fill: #666;
}
.hint {
  margin: 18px 0 0 2px;
  font-size: 12.500px;
  color: #333;
}
.hint p {
  margin: 0;
  display: flex;
  align-items: center;
  white-space: pre;
}
.hint-head {
  height: 16px;
}
.hint-date {
  height: 16px;
  margin-top: 8px !important;
  gap: 7px;
}
.hint-dim {
  height: 20px;
  margin-top: 6px !important;
  gap: 3px;
}
.hint-mea {
  height: 20px;
  margin-top: 8px !important;
  gap: 1px;
}
.hint-pill {
  justify-content: center;
  margin-top: -4px;
  padding: 0 11.500px;
  font-size: 13px;
}

/* sheet tabs */
.tabs {
  height: 27px;
  display: grid;
  grid-template-columns: 131px 194px 114px 113px 159px 121px 114px 116px 123px 85px 33px 32px 32px;
  background: #e6e6e6;
  border-top: 1px solid #d4d4d4;
  box-sizing: border-box;
  font-size: 12.500px;
}
.tab {
  display: flex;
  align-items: center;
  box-sizing: border-box;
  padding-left: 6px;
  border-right: 1px solid #ccc;
  color: #555;
  white-space: nowrap;
  overflow: hidden;
}
.tab.first {
  gap: 5px;
  padding-left: 9px;
}
.tab.current {
  background: #fff;
  font-weight: 700;
  color: #333;
  margin-top: -1px;
}
.tab.icon {
  padding-left: 9px;
}
```
